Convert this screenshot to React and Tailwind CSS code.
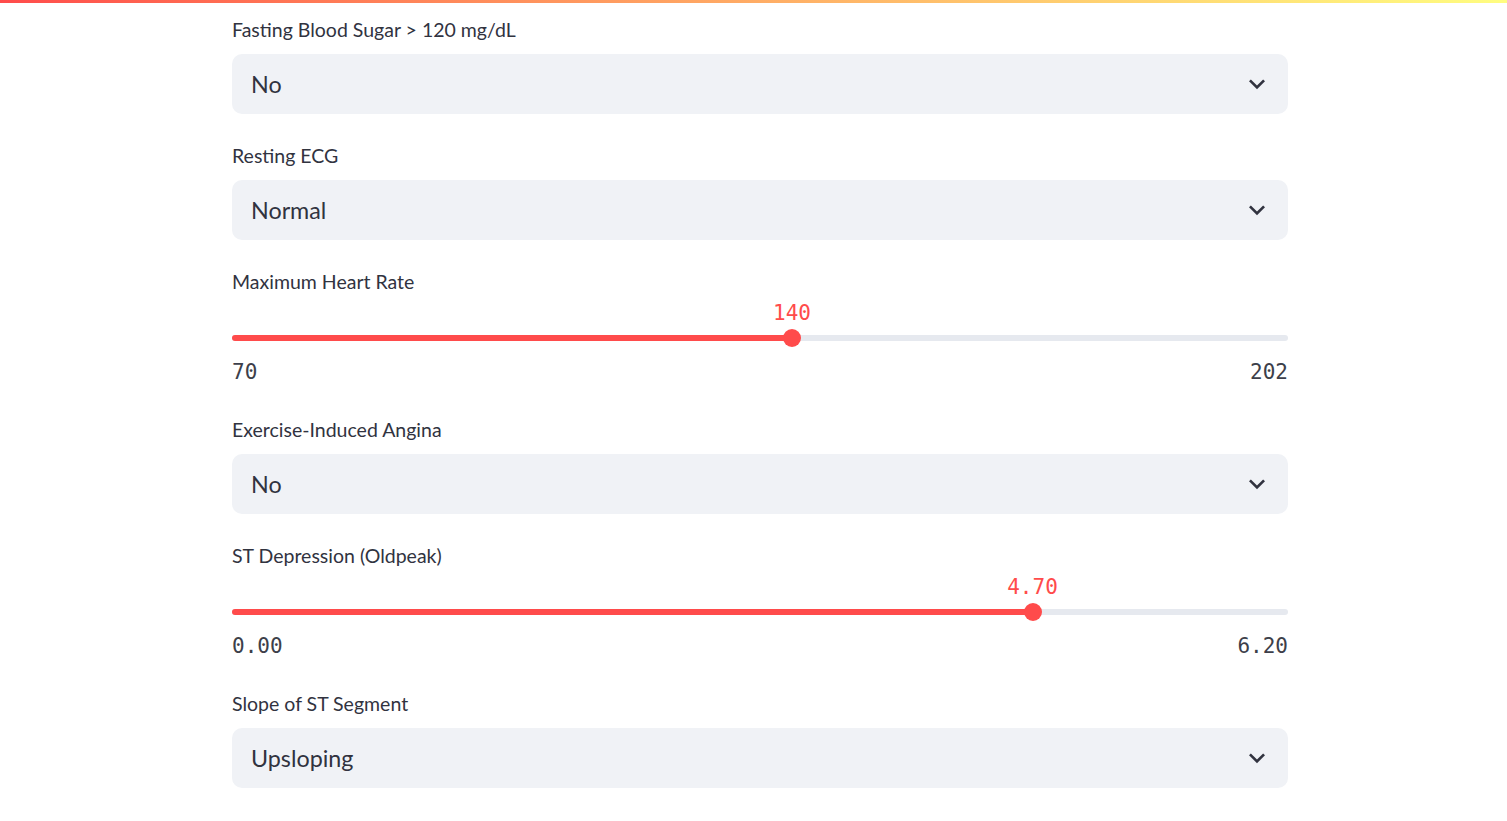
import React from "react";

const selects = {
  fbs: { label: "Fasting Blood Sugar > 120 mg/dL", value: "No" },
  ecg: { label: "Resting ECG", value: "Normal" },
  angina: { label: "Exercise-Induced Angina", value: "No" },
  slope: { label: "Slope of ST Segment", value: "Upsloping" },
};

function Chevron() {
  return (
    <svg viewBox="0 0 24 24" className="w-[32px] h-[32px] text-[#31333f]" fill="currentColor">
      <path d="M7.41 8.59L12 13.17l4.59-4.58L18 10l-6 6-6-6 1.41-1.41z" />
    </svg>
  );
}

function SelectBox({ label, value }) {
  return (
    <div className="flex flex-col">
      <div className="h-[24px] leading-[24px] text-[19.5px] text-[#31333f]">{label}</div>
      <div className="mt-[12px] h-[60px] rounded-[10px] bg-[#f0f2f6] flex items-center justify-between pl-[19px] pr-[15px]">
        <span className="text-[23.3px] text-[#31333f]">{value}</span>
        <Chevron />
      </div>
    </div>
  );
}

function Slider({ label, min, max, value, digits }) {
  const pct = ((value - min) / (max - min)) * 100;
  const fmt = (n) => n.toFixed(digits);
  return (
    <div className="flex flex-col pb-[4px]">
      <div className="h-[24px] leading-[24px] text-[19.5px] text-[#31333f]">{label}</div>
      <div className="relative mt-[7px] h-[24px]">
        <span
          className="absolute top-0 -translate-x-1/2 leading-[24px] text-[21px] text-[#ff4b4b] font-['DejaVu_Sans_Mono',monospace]"
          style={{ left: pct + "%" }}
        >
          {fmt(value)}
        </span>
      </div>
      <div className="relative mt-[4px] h-[18px] flex items-center">
        <div className="w-full h-[6px] rounded-full bg-[#e6e9ef]">
          <div className="h-full rounded-full bg-[#ff4b4b]" style={{ width: pct + "%" }} />
        </div>
        <div
          className="absolute top-0 w-[18px] h-[18px] -translate-x-1/2 rounded-full bg-[#ff4b4b]"
          style={{ left: pct + "%" }}
        />
      </div>
      <div className="mt-[13px] h-[24px] flex justify-between leading-[24px] text-[21px] text-[#3d3f4a] font-['DejaVu_Sans_Mono',monospace]">
        <span>{fmt(min)}</span>
        <span>{fmt(max)}</span>
      </div>
    </div>
  );
}

export default function App() {
  return (
    <div className="min-h-[821px] bg-white font-['Lato',sans-serif] overflow-hidden">
      <div className="h-[3px] bg-gradient-to-r from-[#ff4b4b] to-[#fffd80]" />
      <div className="w-[1056px] ml-[232px] pt-[15px] flex flex-col gap-[30px]">
        <SelectBox {...selects.fbs} />
        <SelectBox {...selects.ecg} />
        <Slider label="Maximum Heart Rate" min={70} max={202} value={140} digits={0} />
        <SelectBox {...selects.angina} />
        <Slider label="ST Depression (Oldpeak)" min={0} max={6.2} value={4.7} digits={2} />
        <SelectBox {...selects.slope} />
      </div>
    </div>
  );
}
